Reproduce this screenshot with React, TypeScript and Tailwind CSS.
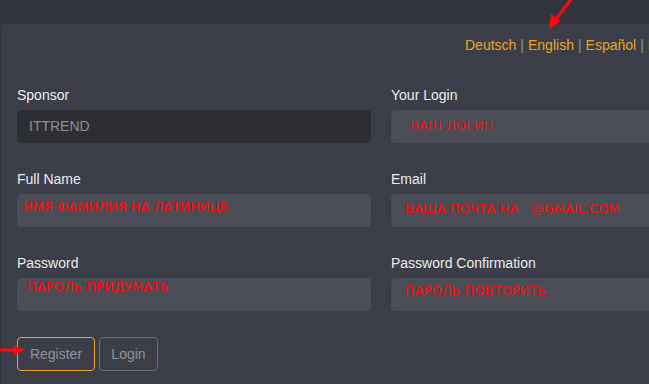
import React from "react";

const font = { fontFamily: '"Liberation Sans", Arial, sans-serif' };

function Field({
  label,
  children,
  dark,
}: {
  label: string;
  children?: React.ReactNode;
  dark?: boolean;
}) {
  return (
    <div className="flex flex-col">
      <div className="h-[16px] text-[14px] leading-[16px] text-[#ececec] mb-[7px]">{label}</div>
      <div
        className={`relative h-[33px] rounded-[4px] ${dark ? "bg-[#2d2e34]" : "bg-[#4a4c56]"}`}
      >
        {children}
      </div>
    </div>
  );
}

function Red({ text, x, y }: { text: string; x: number; y: number }) {
  return (
    <span
      className="absolute whitespace-pre text-[13px] leading-[14px] text-[#ff0a0a] font-['DejaVu_Sans',sans-serif]"
      style={{ left: x, top: y }}
    >
      {text}
    </span>
  );
}

export default function App() {
  return (
    <div className="relative w-[649px] h-[384px] overflow-hidden bg-[#31343d]" style={font}>
      <div className="h-[24px]" />
      <div className="ml-[1px] w-[760px] h-[360px] rounded-tl-[4px] bg-[#3b3e48] pl-[16px]">
        <div className="flex h-[42px] mb-[21px] items-center pl-[448px] text-[14px] text-[#eea324] gap-[4px]">
          <span>Deutsch</span>
          <span className="text-[#8a8f9b]">|</span>
          <span>English</span>
          <span className="text-[#8a8f9b]">|</span>
          <span>Español</span>
          <span className="text-[#8a8f9b]">|</span>
          <span>Français</span>
        </div>
        <div className="grid grid-cols-[354px_354px] gap-x-[20px] gap-y-[28px]">
          <Field label="Sponsor" dark>
            <span className="absolute left-[12px] top-[8px] text-[14px] leading-[17px] text-[#8b8e96]">
              ITTREND
            </span>
          </Field>
          <Field label="Your Login">
            <Red text="ВАШ ЛОГИН" x={19} y={9} />
          </Field>
          <Field label="Full Name">
            <Red text="ИМЯ ФАМИЛИЯ НА ЛАТИНИЦЕ" x={6} y={6} />
          </Field>
          <Field label="Email">
            <Red text="ВАША ПОЧТА НА   @GMAIL.COM" x={14} y={8} />
          </Field>
          <Field label="Password">
            <Red text="ПАРОЛЬ ПРИДУМАТЬ" x={10} y={2} />
          </Field>
          <Field label="Password Confirmation">
            <Red text="ПАРОЛЬ ПОВТОРИТЬ" x={14} y={6} />
          </Field>
        </div>
        <div className="flex gap-[4px] mt-[26px]">
          <button className="h-[34px] w-[78px] rounded-[4px] border border-[#eea324] text-[14px] text-[#8f929a]">
            Register
          </button>
          <button className="h-[34px] w-[59px] rounded-[4px] border border-[#686b78] text-[14px] text-[#8f929a]">
            Login
          </button>
        </div>
      </div>
      <svg className="absolute left-0 top-0" width="649" height="384">
        <line x1="572" y1="-2" x2="556" y2="19" stroke="#ff0a0a" strokeWidth="3" />
        <polygon points="549,29 551,14 561,21" fill="#ff0a0a" />
        <line x1="0" y1="350" x2="16" y2="350" stroke="#ff0a0a" strokeWidth="3" />
        <polygon points="25,350 14,345 14,355" fill="#ff0a0a" />
      </svg>
    </div>
  );
}
